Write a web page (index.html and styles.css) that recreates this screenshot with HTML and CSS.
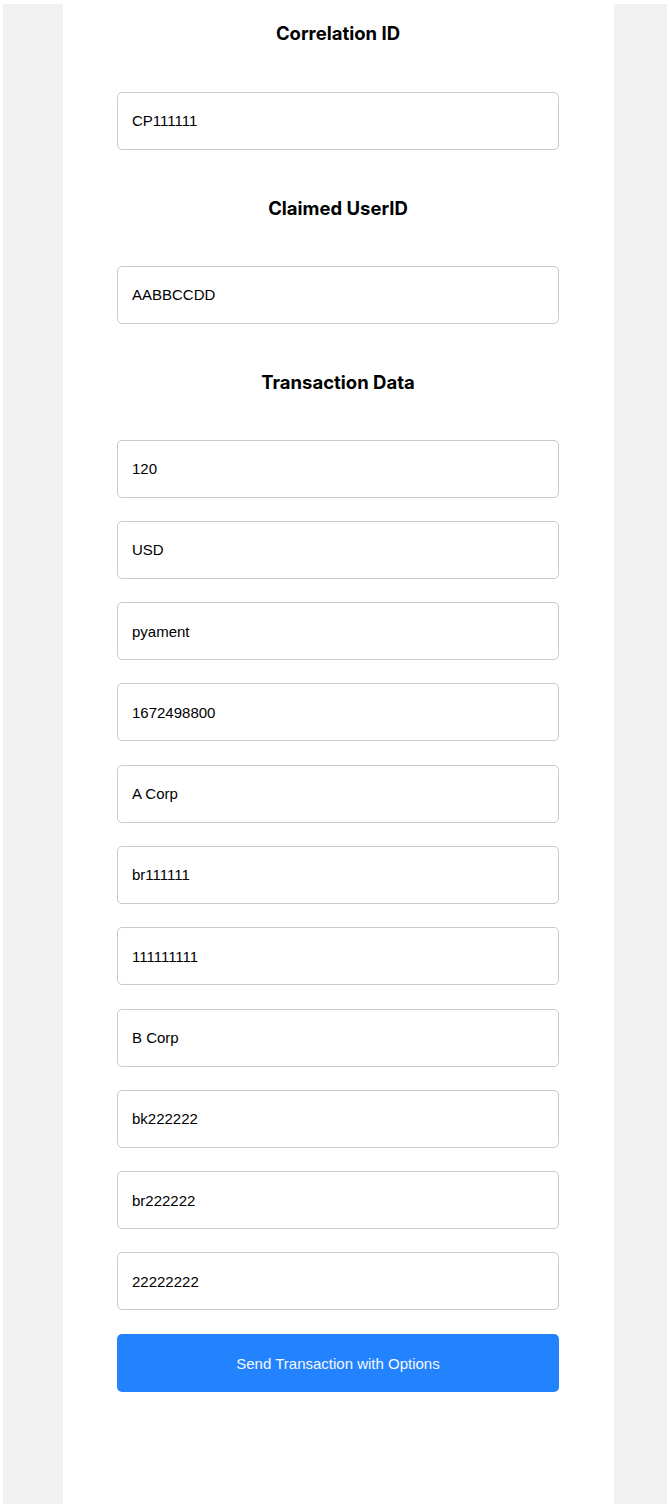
FILE: index.html
```html
<!DOCTYPE html>
<html lang="en">
<head>
<meta charset="utf-8">
<title>Transaction</title>
<link rel="stylesheet" href="styles.css">
</head>
<body>
<div class="page">
  <main class="card">
    <section class="group">
      <h2 class="title">Correlation ID</h2>
      <div class="fields">
        <input class="field" type="text" value="CP111111">
      </div>
    </section>
    <section class="group">
      <h2 class="title">Claimed UserID</h2>
      <div class="fields">
        <input class="field" type="text" value="AABBCCDD">
      </div>
    </section>
    <section class="group">
      <h2 class="title">Transaction Data</h2>
      <div class="fields">
        <input class="field" type="text" value="120">
        <input class="field" type="text" value="USD">
        <input class="field" type="text" value="pyament">
        <input class="field" type="text" value="1672498800">
        <input class="field" type="text" value="A Corp">
        <input class="field" type="text" value="br111111">
        <input class="field" type="text" value="111111111">
        <input class="field" type="text" value="B Corp">
        <input class="field" type="text" value="bk222222">
        <input class="field" type="text" value="br222222">
        <input class="field" type="text" value="22222222">
        <button class="send" type="button">Send Transaction with Options</button>
      </div>
    </section>
  </main>
</div>
</body>
</html>
```

FILE: styles.css
```css
html, body {
  margin: 0;
  padding: 0;
  background: #ffffff;
}

body {
  padding: 4px 2px 3px 3px;
  font-family: "Liberation Sans", Arial, sans-serif;
}

.page {
  background: #f1f1f1;
  height: 1500px;
  padding-left: 60px;
  box-sizing: border-box;
}

.card {
  width: 551px;
  height: 100%;
  background: #ffffff;
  box-sizing: border-box;
  padding: 17px 55px 0 54px;
}

.group {
  margin-bottom: 46px;
}

.title {
  margin: 0 0 46px;
  text-align: center;
  font-family: Inter, "Noto Sans", sans-serif;
  font-weight: 700;
  font-size: 18.5px;
  line-height: 24px;
  color: #000000;
}

.group:first-child .title {
  margin-bottom: 46.5px;
}

.fields {
  display: flex;
  flex-direction: column;
  gap: 23.3px;
}

.field {
  display: block;
  width: 100%;
  height: 58px;
  box-sizing: border-box;
  border: 1px solid #c9c9c9;
  border-radius: 5px;
  padding: 0 14px;
  margin: 0;
  font-family: "Liberation Sans", Arial, sans-serif;
  font-size: 15px;
  color: #000000;
  background: #ffffff;
  outline: none;
}

.send {
  display: block;
  width: 100%;
  height: 58px;
  margin-top: 0.3px;
  border: none;
  border-radius: 5px;
  background: #2382fe;
  color: #f4f8ff;
  font-family: "Liberation Sans", Arial, sans-serif;
  font-size: 15px;
  cursor: pointer;
}
```
